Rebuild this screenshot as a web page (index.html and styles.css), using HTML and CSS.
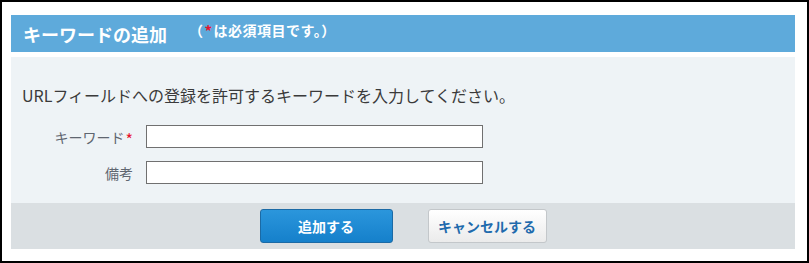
FILE: index.html
```html
<!DOCTYPE html>
<html lang="ja">
<head>
<meta charset="utf-8">
<title>キーワードの追加</title>
<link rel="stylesheet" href="styles.css">
</head>
<body>
<div class="frame">
  <div class="header">
    <h1 class="title">キーワードの追加</h1>
    <span class="note">（<span class="req">*</span>は必須項目です。）</span>
  </div>
  <div class="panel">
    <p class="intro">URLフィールドへの登録を許可するキーワードを入力してください。</p>
    <div class="row">
      <label class="label" for="kw">キーワード<span class="req-label">*</span></label>
      <input class="field" id="kw" type="text">
    </div>
    <div class="row">
      <label class="label" for="memo">備考</label>
      <input class="field" id="memo" type="text">
    </div>
  </div>
  <div class="footer">
    <button class="btn btn-primary" type="button">追加する</button>
    <button class="btn btn-secondary" type="button">キャンセルする</button>
  </div>
</div>
</body>
</html>
```

FILE: styles.css
```css
html, body {
  margin: 0;
  padding: 0;
  background: #ffffff;
}
body {
  font-family: "Noto Sans CJK JP", "Noto Sans", sans-serif;
}
.frame {
  box-sizing: border-box;
  width: 809px;
  height: 263px;
  border: 2px solid #000000;
  padding: 13px 12px 12px 9px;
  display: flex;
  flex-direction: column;
}
.header {
  height: 37px;
  background: #5eaadb;
  display: flex;
  align-items: center;
  padding-left: 12px;
  flex-shrink: 0;
}
.title {
  margin: 0;
  font-size: 18px;
  font-weight: bold;
  color: #ffffff;
  line-height: 24px;
}
.note {
  margin-left: 22px;
  margin-bottom: 6px;
  font-size: 14px;
  font-weight: bold;
  color: #ffffff;
  line-height: 18px;
  letter-spacing: 0.5px;
}
.req {
  color: #e8112d;
  font-size: 15px;
  vertical-align: -1px;
  margin: 0 1px;
}
.panel {
  margin-top: 5px;
  height: 146px;
  box-sizing: border-box;
  background: #eef3f6;
  padding: 26px 11px 0 11px;
  flex-shrink: 0;
}
.intro {
  margin: 0 0 18px 0;
  font-size: 16px;
  line-height: 24px;
  color: #3a3a3a;
}
.row {
  display: flex;
  align-items: center;
  height: 23px;
  margin-bottom: 13px;
  margin-left: -11px;
}
.label {
  width: 122px;
  text-align: right;
  font-size: 14px;
  color: #5f6670;
  line-height: 20px;
}
.req-label {
  color: #e8112d;
  font-size: 16px;
  line-height: 14px;
  vertical-align: -3px;
  margin-left: 1px;
}
.field {
  box-sizing: border-box;
  margin: 0 0 0 13px;
  width: 337px;
  height: 23px;
  border: 1px solid #707070;
  background: #ffffff;
  padding: 0 4px;
  font-size: 14px;
  font-family: inherit;
  border-radius: 0;
  outline: none;
}
.footer {
  height: 46px;
  box-sizing: border-box;
  background: #dadfe2;
  display: flex;
  justify-content: center;
  align-items: center;
  gap: 35px;
  flex-shrink: 0;
}
.btn {
  box-sizing: border-box;
  height: 34px;
  border-radius: 3px;
  font-family: inherit;
  font-size: 14px;
  font-weight: bold;
  cursor: pointer;
  padding: 0;
}
.btn-primary {
  width: 133px;
  color: #ffffff;
  border: 1px solid #1b6aa5;
  background: linear-gradient(#2b96dc, #1580cb);
}
.btn-secondary {
  width: 119px;
  color: #1f6bad;
  border: 1px solid #c3c7ca;
  background: linear-gradient(#ffffff, #ebebeb);
}
```
